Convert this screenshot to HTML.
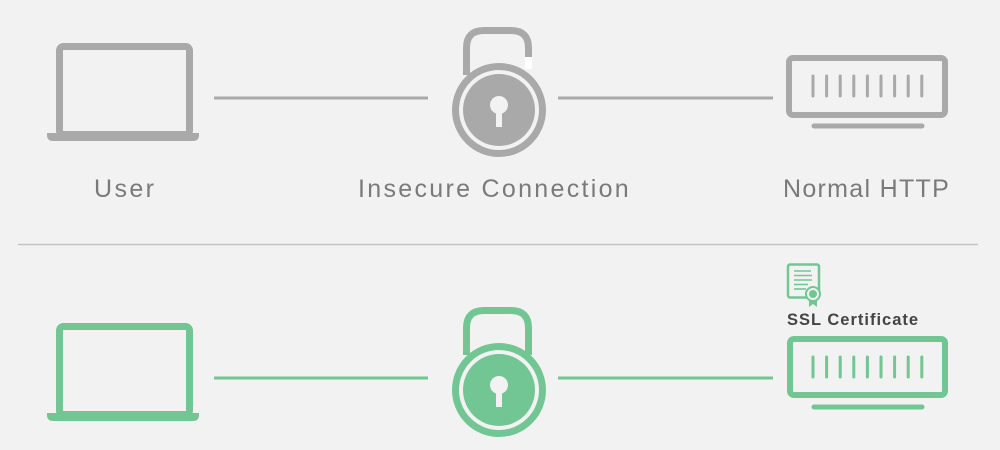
<!DOCTYPE html>
<html><head><style>
html,body{margin:0;padding:0;background:#f2f2f2;width:1000px;height:450px;overflow:hidden;}
.l{position:absolute;font-family:"Liberation Sans",sans-serif;font-size:25px;letter-spacing:2.1px;color:#7a7a7a;top:175px;white-space:nowrap;}
</style></head><body>
<svg width="1000" height="450" style="position:absolute;left:0;top:0">
<g stroke="#a9a9a9" fill="none">
 <rect x="59.5" y="46.5" width="130" height="88" rx="4" stroke-width="7"/>
 <path d="M47 133 H199 V135 Q199 141 193 141 H53 Q47 141 47 135Z" fill="#a9a9a9" stroke="none"/>
 <line x1="214" y1="98" x2="428" y2="98" stroke-width="3"/>
 <line x1="558" y1="98" x2="773" y2="98" stroke-width="3"/>
 <path d="M466.5 75 V48 Q466.5 30.5 484 30.5 H511 Q528.5 30.5 528.5 48 V58" stroke-width="7"/>
 <rect x="525" y="57" width="7" height="12" fill="#fff" stroke="none"/>
 <circle cx="499" cy="110" r="43.5" stroke-width="7" fill="#f2f2f2"/>
 <circle cx="499" cy="110" r="36" fill="#a9a9a9" stroke="none"/>
 <circle cx="499" cy="105" r="9" fill="#f2f2f2" stroke="none"/>
 <rect x="496" y="108" width="6" height="19" fill="#f2f2f2" stroke="none"/>
 <rect x="789" y="58" width="156" height="57" rx="4" stroke-width="6"/>
 <g stroke-width="3" stroke-linecap="round">
  <line x1="813" y1="76" x2="813" y2="96"/><line x1="826.6" y1="76" x2="826.6" y2="96"/><line x1="840.2" y1="76" x2="840.2" y2="96"/><line x1="853.8" y1="76" x2="853.8" y2="96"/><line x1="867.4" y1="76" x2="867.4" y2="96"/><line x1="881" y1="76" x2="881" y2="96"/><line x1="894.6" y1="76" x2="894.6" y2="96"/><line x1="908.2" y1="76" x2="908.2" y2="96"/><line x1="921.8" y1="76" x2="921.8" y2="96"/>
 </g>
 <line x1="814" y1="126" x2="922" y2="126" stroke-width="5" stroke-linecap="round"/>
</g>
<line x1="18" y1="244.5" x2="978" y2="244.5" stroke="#c4c4c4" stroke-width="1.5"/>
<g stroke="#72c693" fill="none">
 <rect x="59.5" y="326.5" width="130" height="88" rx="4" stroke-width="7"/>
 <path d="M47 413 H199 V415 Q199 421 193 421 H53 Q47 421 47 415Z" fill="#72c693" stroke="none"/>
 <line x1="214" y1="378" x2="428" y2="378" stroke-width="3"/>
 <line x1="558" y1="378" x2="773" y2="378" stroke-width="3"/>
 <path d="M466.5 355 V328 Q466.5 310.5 484 310.5 H511 Q528.5 310.5 528.5 328 V355" stroke-width="7"/>
 <circle cx="499" cy="390" r="43.5" stroke-width="7" fill="#f2f2f2"/>
 <circle cx="499" cy="390" r="36" fill="#72c693" stroke="none"/>
 <circle cx="499" cy="385" r="9" fill="#f2f2f2" stroke="none"/>
 <rect x="496" y="388" width="6" height="19" fill="#f2f2f2" stroke="none"/>
 <rect x="790" y="339" width="155" height="56" rx="4" stroke-width="6"/>
 <g stroke-width="3" stroke-linecap="round">
  <line x1="813" y1="357" x2="813" y2="377"/><line x1="826.6" y1="357" x2="826.6" y2="377"/><line x1="840.2" y1="357" x2="840.2" y2="377"/><line x1="853.8" y1="357" x2="853.8" y2="377"/><line x1="867.4" y1="357" x2="867.4" y2="377"/><line x1="881" y1="357" x2="881" y2="377"/><line x1="894.6" y1="357" x2="894.6" y2="377"/><line x1="908.2" y1="357" x2="908.2" y2="377"/><line x1="921.8" y1="357" x2="921.8" y2="377"/>
 </g>
 <line x1="814" y1="407" x2="922" y2="407" stroke-width="5" stroke-linecap="round"/>
 <rect x="788" y="264.5" width="31" height="33" rx="2" stroke-width="2.5"/>
 <g stroke-width="1.6"><line x1="794" y1="271" x2="811" y2="271"/><line x1="794" y1="275.5" x2="812" y2="275.5"/><line x1="794" y1="280" x2="812" y2="280"/><line x1="794" y1="284.5" x2="808" y2="284.5"/><line x1="794" y1="289" x2="806" y2="289"/></g>
 <path d="M809 296 L809 307 L813 304 L817 307 L817 296Z" fill="#72c693" stroke="none"/>
 <circle cx="813" cy="294" r="7" fill="#f2f2f2" stroke-width="2"/>
 <circle cx="813" cy="294" r="4" fill="#72c693" stroke="none"/>
</g>
</svg>
<div class="l" style="left:94px;letter-spacing:2.4px">User</div>
<div class="l" style="left:358px;letter-spacing:2.3px">Insecure Connection</div>
<div class="l" style="left:783px;letter-spacing:1.3px">Normal HTTP</div>
<div style="position:absolute;left:787px;top:311px;font-family:'Liberation Sans',sans-serif;font-weight:bold;font-size:16.5px;letter-spacing:1px;color:#444;white-space:nowrap">SSL Certificate</div>
</body></html>
